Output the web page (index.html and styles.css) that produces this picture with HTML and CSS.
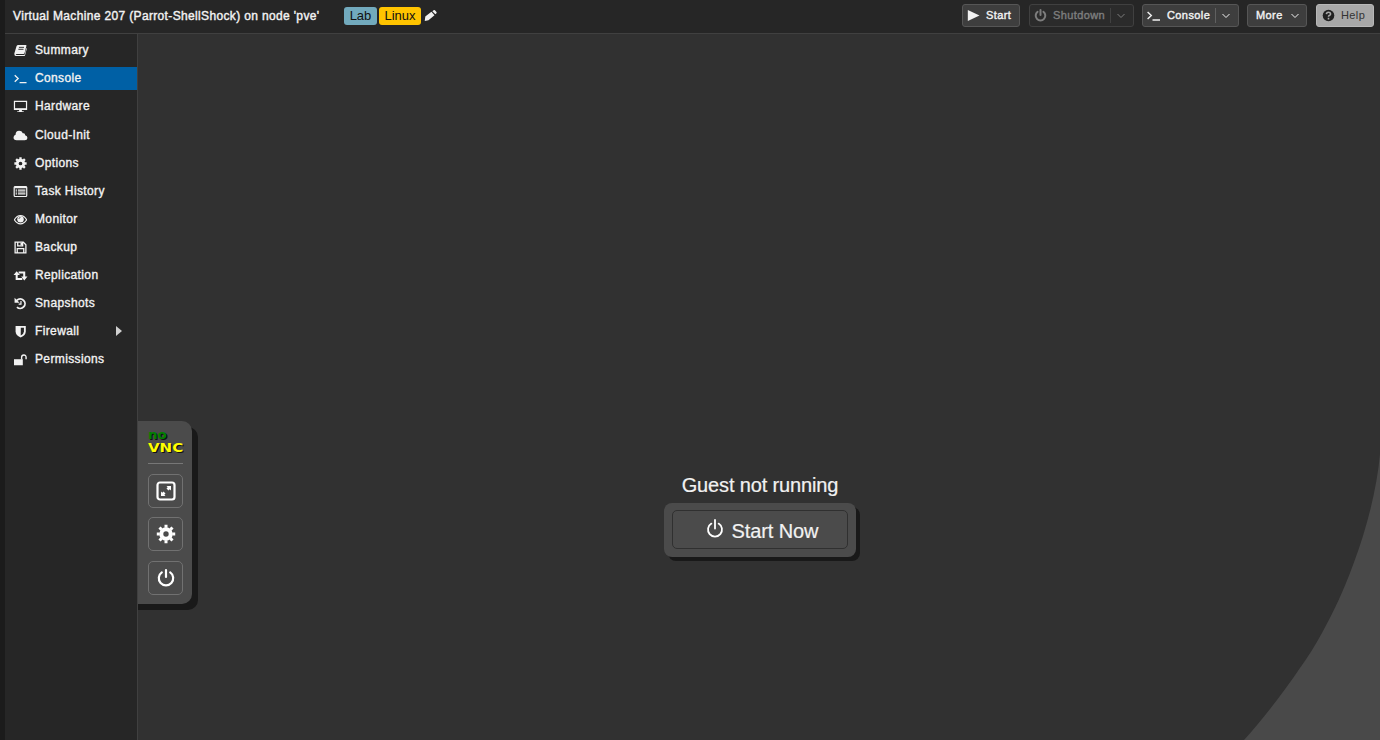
FILE: index.html
```html
<!DOCTYPE html>
<html lang="en">
<head>
<meta charset="utf-8">
<title>Virtual Machine 207</title>
<link rel="stylesheet" href="styles.css">
</head>
<body>
<div class="panel">
  <header class="header">
    <h1 class="title">Virtual Machine 207 (Parrot-ShellShock) on node 'pve'</h1>
    <div class="tags">
      <span class="tag tag-lab">Lab</span>
      <span class="tag tag-linux">Linux</span>
      <svg class="pencil" viewBox="0 0 14 14"><path d="M.8 12.800l.6-4.600L8 3l3.300 3.600-6.500 5.500zM9 2.300l1.300-1q.8-.6 1.500.1l1.600 1.700q.6.700 0 1.400L12.200 5.600z" fill="#f0f0f0"/></svg>
    </div>
    <div class="actions">
      <button class="btn btn-start"><svg class="ico" viewBox="0 0 13 13"><path d="M.8 1L12.500 6.500.8 12z" fill="currentColor"/></svg><span>Start</span></button>
      <button class="btn btn-shutdown"><svg class="ico" viewBox="0 0 13 13"><path d="M3.600 2.800a4.800 4.800 0 1 0 5.800 0M6.500 1v5" fill="none" stroke="currentColor" stroke-width="2" stroke-linecap="round"/></svg><span>Shutdown</span><i class="split"></i><svg class="chev" viewBox="0 0 10 6"><path d="M1.500 1L5 4.500 8.500 1" fill="none" stroke="currentColor"/></svg></button>
      <button class="btn btn-console"><svg class="ico" viewBox="0 0 13 13"><path d="M.6 3L4.300 6.500.6 10M5.500 11h7.500" fill="none" stroke="currentColor" stroke-width="1.400"/></svg><span>Console</span><i class="split"></i><svg class="chev" viewBox="0 0 10 6"><path d="M1.500 1L5 4.500 8.500 1" fill="none" stroke="currentColor"/></svg></button>
      <button class="btn btn-more"><span>More</span><svg class="chev" viewBox="0 0 10 6"><path d="M1.500 1L5 4.500 8.500 1" fill="none" stroke="currentColor"/></svg></button>
      <button class="btn btn-help"><svg class="ico" viewBox="0 0 13 13"><circle cx="6.500" cy="6.500" r="5.800" fill="#222"/><path d="M4.400 5.200q.2-2 2.100-2t2.100 1.700q0 1-1.300 1.500-.8.400-.8 1.300M6.500 8.800v1.700" fill="none" stroke="#aaa" stroke-width="1.600"/></svg><span>Help</span></button>
    </div>
  </header>
  <div class="body">
    <nav class="nav">
      <a class="item"><svg class="ico" viewBox="0 0 14 14"><path d="M4.500 1h8.300q.8 0 .6.800L11.300 10q-.2.800-1 .8H2.700q-.9 0-.8.600 0 .5.800.5h8.200q.5 0 .6-.5L13.500 4q.5.400.3 1.100l-1.900 7q-.3.900-1.200.9H2.300Q.5 13 .4 11q-.1-.6.100-1.200L2.800 2.200Q3.300 1 4.500 1z" fill="currentColor"/><path d="M5.300 3.600h5.500M4.700 5.700h5.500" stroke="#262626"/></svg>Summary</a>
      <a class="item active"><svg class="ico" viewBox="0 0 14 14"><path d="M.8 3.500L4.500 7 .8 10.500M6 11.500h7.500" fill="none" stroke="currentColor" stroke-width="1.400"/></svg>Console</a>
      <a class="item"><svg class="ico wide" viewBox="0 0 15 14"><path d="M1 1.500h13v8.500H1z" fill="none" stroke="currentColor" stroke-width="1.300"/><path d="M6 10h3v2h2v1H4v-1h2zM1 9h13v1.500H1z" fill="currentColor"/></svg>Hardware</a>
      <a class="item"><svg class="ico wide" viewBox="0 0 15 14"><path d="M3.300 12.200Q0 12 0 9.200 0 7 2.200 6.300 2.200 2 6 2q3 0 4 2.600 2.600-.6 2.500 2.200Q15 7.400 15 9.700q-.2 2.500-3 2.500z" fill="currentColor"/></svg>Cloud-Init</a>
      <a class="item"><svg class="ico" viewBox="0 0 14 14"><circle cx="7" cy="7" r="3.500" fill="none" stroke="currentColor" stroke-width="3"/><path d="M7 .4v2.500M7 11.100v2.500M.4 7h2.500M11.100 7h2.500M2.300 2.300l1.600 1.600M10.100 10.100l1.600 1.600M2.300 11.700l1.600-1.600M10.100 3.900l1.600-1.600" stroke="currentColor" stroke-width="2.500"/></svg>Options</a>
      <a class="item"><svg class="ico wide" viewBox="0 0 15 14"><rect x=".7" y="1.600" width="13.500" height="10.800" rx="1" fill="none" stroke="currentColor" stroke-width="1.300"/><path d="M1 2.500h13" stroke="currentColor" stroke-width="2"/><path d="M2.300 5.500h1.500m1 0h8M2.300 7.500h1.500m1 0h8M2.300 9.500h1.500m1 0h8" stroke="currentColor" stroke-width="1.200"/></svg>Task History</a>
      <a class="item"><svg class="ico" viewBox="0 0 14 14"><path d="M.4 7.300Q3 2.700 7 2.700t6.600 4.600Q11 11.700 7 11.700T.4 7.300z" fill="none" stroke="currentColor" stroke-width="1.300"/><circle cx="7" cy="6.600" r="3.500" fill="currentColor"/><path d="M5.300 6.300Q5.400 4.800 7 4.700" fill="none" stroke="#262626" stroke-width=".8"/></svg>Monitor</a>
      <a class="item"><svg class="ico" viewBox="0 0 14 14"><path d="M1.200 1.200H10L12.800 4v8.800H1.200zM3.500 12.500V8.300h7v4.200M4 1.500v3.800h5.300V1.500" fill="none" stroke="currentColor" stroke-width="1.400"/><path d="M7 2h1.600v2.600H7z" fill="currentColor"/></svg>Backup</a>
      <a class="item"><svg class="ico wide" viewBox="0 0 15 14"><path d="M3.400 5v5.800h6M5.500 3.800h6v5.500" fill="none" stroke="currentColor" stroke-width="2.200"/><path d="M0 6.500L3.400 2.300l3.500 4.200zM8.200 8L11.600 12.300 15 8z" fill="currentColor"/></svg>Replication</a>
      <a class="item"><svg class="ico" viewBox="0 0 14 14"><path d="M3.100 3.600A5.100 5.100 0 1 1 3.200 10.900" fill="none" stroke="currentColor" stroke-width="2"/><path d="M.6.900v5.400h5.400z" fill="currentColor"/><path d="M7.500 4.300v3.400H5" fill="none" stroke="currentColor" stroke-width="1.300"/></svg>Snapshots</a>
      <a class="item"><svg class="ico" viewBox="0 0 14 14"><path d="M1.700 1h11V7q0 4.100-5.500 6.500Q1.700 11.100 1.700 7z" fill="currentColor"/><path d="M7.300 2.900h3.400v4.200q0 2.300-3.400 4.200z" fill="#262626"/></svg>Firewall<i class="arrow"></i></a>
      <a class="item"><svg class="ico" viewBox="0 0 14 14"><path d="M0 6.700h9.500v6.500H0z" fill="currentColor"/><path d="M8.200 7V4.700Q8.200 2.200 10.600 2.200T13 4.700V6.600" fill="none" stroke="currentColor" stroke-width="1.500"/></svg>Permissions</a>
    </nav>
    <main class="screen">
      <svg class="arc" viewBox="0 0 140 300"><path d="M140 14C137 48 127 88 113 125 104 150 93 173 82 193 75 206 67 218 60 228 44 252 22 280 4 300H140z" fill="#494949"/></svg>
      <aside class="vnc">
        <div class="logo"><span class="logo-no">no</span><span class="logo-vnc">VNC</span></div>
        <hr class="rule">
        <button class="tool"><svg viewBox="0 0 20 20"><rect x="1.500" y="1.500" width="17" height="17" rx="2.500" fill="none" stroke="#fff" stroke-width="2.200"/><path d="M10.500 5H15v4.500l-1.300-1.200-1.200 1.200-2-2 1.200-1.200zM9.500 15H5v-4.500l1.300 1.200 1.200-1.200 2 2-1.200 1.200z" fill="#fff"/></svg></button>
        <button class="tool"><svg viewBox="0 0 20 20"><circle cx="10" cy="10" r="4.700" fill="none" stroke="#fff" stroke-width="4"/><path d="M10 .8v3M10 16.200v3M.8 10h3M16.200 10h3M3.500 3.500l2.100 2.100M14.400 14.400l2.100 2.100M3.500 16.500l2.100-2.100M14.400 5.600l2.100-2.100" stroke="#fff" stroke-width="3"/></svg></button>
        <button class="tool"><svg viewBox="0 0 20 20"><path d="M5.800 4.300a7.200 7.200 0 1 0 8.400 0M10 2v7" fill="none" stroke="#fff" stroke-width="2.200" stroke-linecap="round"/></svg></button>
      </aside>
      <section class="guest">
        <p class="message">Guest not running</p>
        <div class="start-box"><button class="start-now"><svg viewBox="0 0 18 20"><path d="M5.400 4.600a7 7 0 1 0 7.200 0M9 1v8.500" fill="none" stroke="#fff" stroke-width="1.800" stroke-linecap="round"/></svg><span>Start Now</span></button></div>
      </section>
    </main>
  </div>
</div>
</body>
</html>
```
FILE: styles.css
```css
* { box-sizing: border-box; }
body { margin: 0; background: #1b1b1b; color: #f2f2f2; font: 12px "Liberation Sans", Arial, sans-serif; overflow: hidden; }
button { font: inherit; color: inherit; padding: 0; margin: 0; }
svg { display: block; flex: none; }
.panel { height: 740px; margin-left: 5px; display: flex; flex-direction: column; background: #262626; }
.header { height: 34px; flex: none; display: flex; align-items: flex-start; border-bottom: 1px solid #404040; padding: 4px 6px 0 8px; }
.title { margin: 4px 0 0; width: 331px; font-size: 12px; line-height: 17px; font-weight: 400; letter-spacing: .35px; white-space: nowrap; -webkit-text-stroke: .4px; }
.tags { display: flex; gap: 2px; margin-top: 3px; }
.tag { height: 18px; border-radius: 3px; color: #111; font-size: 13px; line-height: 18px; text-align: center; }
.tag-lab { width: 33px; background: #72aabd; }
.tag-linux { width: 42px; background: #ffc400; }
.pencil { width: 13px; height: 13px; margin: 2px 0 0 1px; }
.actions { display: flex; margin-left: auto; }
.btn { height: 23px; display: flex; align-items: center; border: 1px solid #565656; border-radius: 3px; background: #3e3e3e; font-size: 11px; letter-spacing: .4px; -webkit-text-stroke: .4px; padding: 0 0 1px 4px; margin-left: 8px; }
.btn .ico { width: 13px; height: 13px; margin-right: 6px; }
.btn-start { width: 58px; }
.btn-shutdown { width: 105px; margin-left: 9px; background: #2b2b2b; border-color: #404040; color: #7d7d7d; }
.btn-console { width: 97px; }
.btn-console .ico { margin-right: 7px; }
.btn-more { width: 60px; padding-left: 8px; }
.btn-more .chev { margin-left: 7px; }
.btn-help { width: 58px; margin-left: 9px; padding-left: 5px; background: #a8a8a8; border-color: #b8b8b8; color: #333; -webkit-text-stroke: 0; }
.btn-help .ico { margin-right: 6px; }
.split { width: 1px; height: 15px; margin: 0 5px 0 5px; background: #606060; }
.btn-shutdown .split { background: #414141; }
.chev { width: 10px; height: 6px; margin-top: 1px; }
.body { flex: 1; display: flex; min-height: 0; }
.nav { width: 133px; flex: none; display: flex; flex-direction: column; gap: 5px; padding-top: 5px; border-right: 1px solid #404040; }
.item { height: 23px; flex: none; display: flex; align-items: center; padding: 0 0 1px 9px; font-size: 12px; letter-spacing: .37px; -webkit-text-stroke: .35px; }
.item:nth-child(n+4) { padding-bottom: 0; }
.item .ico { width: 13px; height: 13px; margin: 1px 8px 0 0; }
.item .wide { width: 15px; margin: 1px 7px 0 -1px; }
.active { background: #0060a5; }
.arrow { margin: 0 15px 0 auto; border-left: 6px solid #d0d0d0; border-top: 5px solid transparent; border-bottom: 5px solid transparent; }
.screen { flex: 1; position: relative; background: #313131; display: flex; align-items: flex-start; overflow: hidden; }
.arc { position: absolute; right: 0; bottom: 0; width: 140px; height: 300px; }
.vnc { width: 54px; height: 183px; margin-top: 387px; border-radius: 0 10px 10px 0; background: #4b4b4b; box-shadow: 6px 6px 0 #191919, 0 6px 0 #191919; display: flex; flex-direction: column; align-items: flex-start; padding: 10px 0 0 10px; }
.logo { width: 36px; height: 24px; font-family: "DejaVu Sans", sans-serif; display: flex; flex-direction: column; align-items: flex-start; }
.logo span { display: block; transform-origin: 0 50%; white-space: nowrap; }
.logo-no { height: 11px; font-size: 12px; line-height: 9px; font-weight: 700; color: #008000; text-shadow: 1px 1px 0 #111; transform: scaleX(1.12); }
.logo-vnc { height: 12px; font-size: 12px; line-height: 12px; font-weight: 700; color: #ff0; text-shadow: 1px 1px 0 #111; transform: scaleX(1.25); }
.rule { width: 35px; height: 1px; margin: 8px 0 10px; border: 0; background: #777; }
.tool { width: 35px; height: 34px; margin-bottom: 9.500px; border: 1px solid #717171; border-radius: 5px; background: transparent; display: grid; place-items: center; }
.tool svg { width: 20px; height: 20px; }
.guest { margin: 440px 0 0 472px; width: 192px; display: flex; flex-direction: column; align-items: center; }
.message { margin: 0 0 6px; font-size: 20px; line-height: 23px; letter-spacing: -.14px; white-space: nowrap; -webkit-text-stroke: .2px; }
.start-box { width: 192px; height: 54px; padding: 7px 8px 8px; border-radius: 8px; background: #4b4b4b; box-shadow: 4px 4px 0 #191919; }
.start-now { width: 176px; height: 39px; border: 1px solid #303030; border-radius: 5px; background: transparent; display: flex; align-items: center; justify-content: center; gap: 8px; font-size: 20px; letter-spacing: -.1px; padding: 3px 0 0 4px; -webkit-text-stroke: .2px; }
.start-now svg { width: 18px; height: 20px; margin-top: -4px; }
```
